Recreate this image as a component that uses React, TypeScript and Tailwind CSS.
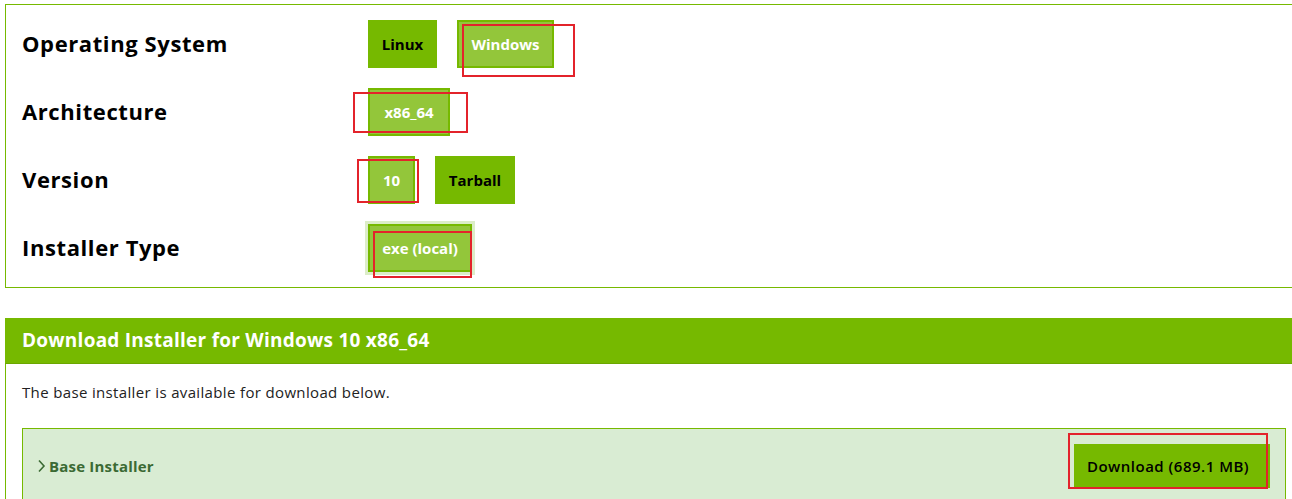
import React from 'react';

type Opt = {
  label: string;
  width: string;
  selected?: boolean;
  focused?: boolean;
  mark?: string;
};

type Row = { title: string; options: Opt[] };

const rows: Row[] = [
  {
    title: 'Operating System',
    options: [
      { label: 'Linux', width: 'w-[69px]' },
      { label: 'Windows', width: 'w-[97px]', selected: true, mark: 'left-[3px] top-[2px] w-[113px] h-[53px]' }
    ]
  },
  {
    title: 'Architecture',
    options: [{ label: 'x86_64', width: 'w-[82px]', selected: true, mark: 'left-[-17px] top-[2px] w-[115px] h-[41px]' }]
  },
  {
    title: 'Version',
    options: [
      { label: '10', width: 'w-[47px]', selected: true, mark: 'left-[-13px] top-[1px] w-[62px] h-[44px]' },
      { label: 'Tarball', width: 'w-[80px]' }
    ]
  },
  {
    title: 'Installer Type',
    options: [
      { label: 'exe (local)', width: 'w-[104px]', selected: true, focused: true, mark: 'left-[3px] top-[5px] w-[99px] h-[47px]' }
    ]
  }
];

// red annotation box drawn over a button
function Mark({ className }: { className: string }) {
  return <span className={`pointer-events-none absolute border-2 border-[#e3232b] ${className}`} />;
}

function OptionButton({ opt }: { opt: Opt }) {
  const base = 'relative flex h-[48px] items-center justify-center text-[15px] font-bold';
  const look = opt.selected
    ? 'border-2 border-[#76b900] bg-[#93c63a] text-white'
    : 'bg-[#76b900] text-black';
  return (
    <div className={`${base} ${look} ${opt.width} ${opt.focused ? 'outline-[3px] outline-solid outline-[#dcedc8]' : ''}`}>
      {opt.label}
      {opt.mark && <Mark className={opt.mark} />}
    </div>
  );
}

export default function App() {
  return (
    <div className="min-h-[499px] overflow-hidden bg-white pl-[5px] pt-[4px] font-['Open_Sans','Liberation_Sans',sans-serif] text-black">
      {/* Selector panel */}
      <div className="flex w-[1320px] flex-col gap-[20px] border border-[#76b900] py-[15px] pl-[16px]">
        {rows.map((row) => (
          <div key={row.title} className="flex h-[48px] items-center">
            <div className="w-[346px] pb-[2px] text-[22px] font-bold tracking-[0.6px]">{row.title}</div>
            <div className="flex gap-[20px]">
              {row.options.map((opt) => (
                <OptionButton key={opt.label} opt={opt} />
              ))}
            </div>
          </div>
        ))}
      </div>

      {/* Download panel */}
      <div className="mt-[30px] w-[1320px]">
        <div className="flex h-[46px] items-center border-b border-[#6aa600] bg-[#76b900] pl-[17px] text-[19px] font-bold tracking-[0.25px] text-white">
          Download Installer for Windows 10 x86_64
        </div>
        <div className="border-l border-[#76b900] pl-[16px] pt-[18px]">
          <p className="text-[15px] leading-[20px] tracking-[0.35px] text-[#222]">
            The base installer is available for download below.
          </p>
          <div className="mt-[26px] flex w-[1264px] items-center justify-between border border-[#76b900] bg-[#d9ecd3] py-[15px] pl-[14px] pr-[15px]">
            <div className="flex items-center gap-[3px] text-[15px] font-bold tracking-[0.2px] text-[#3b6a34]">
              <svg width="9" height="14" viewBox="0 0 9 14" fill="none">
                <path d="M2 1.5 L7 7 L2 12.5" stroke="#3b6a34" strokeWidth="1.6" />
              </svg>
              Base Installer
            </div>
            <div className="relative flex h-[44px] w-[196px] items-center justify-center pr-[8px] bg-[#76b900] text-[15px] font-semibold tracking-[0.5px] text-black">
              Download (689.1 MB)
              <Mark className="left-[-6px] top-[-11px] h-[56px] w-[200px]" />
            </div>
          </div>
        </div>
      </div>
    </div>
  );
}
